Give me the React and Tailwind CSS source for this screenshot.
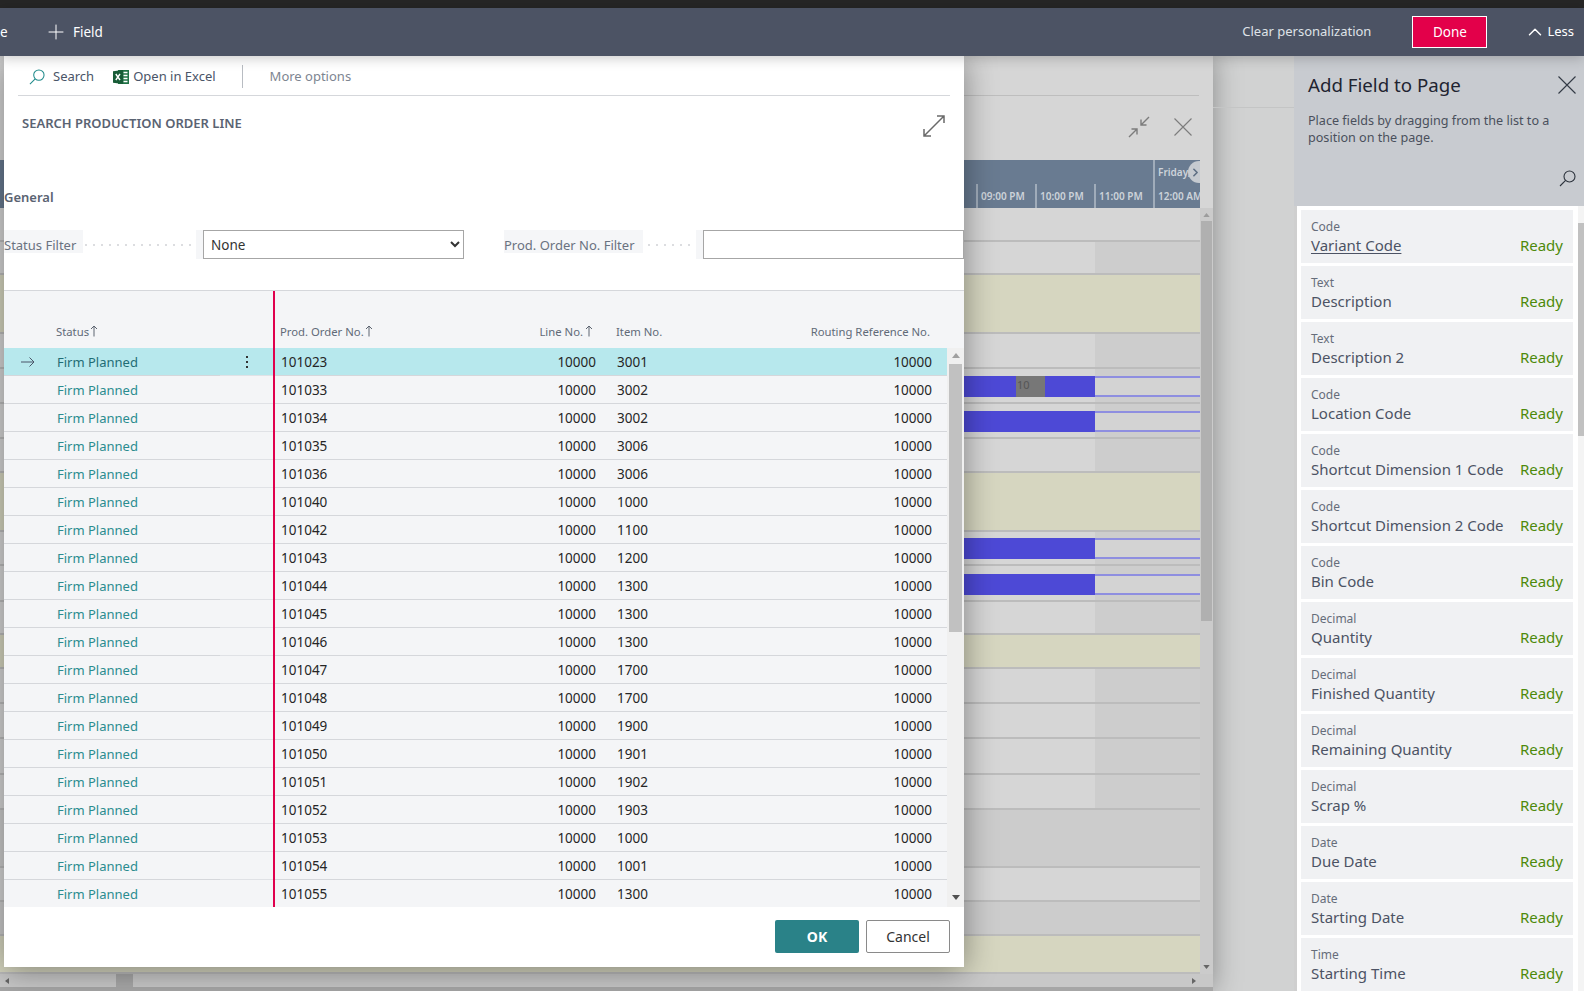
import React from "react";
import { Plus, ChevronUp, ChevronRight } from "lucide-react";

const orders = [
  ["101023", "3001"], ["101033", "3002"], ["101034", "3002"], ["101035", "3006"],
  ["101036", "3006"], ["101040", "1000"], ["101042", "1100"], ["101043", "1200"],
  ["101044", "1300"], ["101045", "1300"], ["101046", "1300"], ["101047", "1700"],
  ["101048", "1700"], ["101049", "1900"], ["101050", "1901"], ["101051", "1902"],
  ["101052", "1903"], ["101053", "1000"], ["101054", "1001"], ["101055", "1300"],
];

const fields = [
  ["Code", "Variant Code"], ["Text", "Description"], ["Text", "Description 2"],
  ["Code", "Location Code"], ["Code", "Shortcut Dimension 1 Code"],
  ["Code", "Shortcut Dimension 2 Code"], ["Code", "Bin Code"], ["Decimal", "Quantity"],
  ["Decimal", "Finished Quantity"], ["Decimal", "Remaining Quantity"], ["Decimal", "Scrap %"],
  ["Date", "Due Date"], ["Date", "Starting Date"], ["Time", "Starting Time"],
];

const ganttRows = [
  { h: "h-[34px]", kind: "plain" },
  { h: "h-[33px]", kind: "col" },
  { h: "h-[59px]", kind: "yellow" },
  { h: "h-[35px]", kind: "col" },
  { h: "h-[35px]", kind: "bar", mt: "mt-[7px]", label: "10" },
  { h: "h-[35px]", kind: "bar", mt: "mt-[7px]" },
  { h: "h-[34px]", kind: "col" },
  { h: "h-[59px]", kind: "yellow" },
  { h: "h-[34px]", kind: "bar", mt: "mt-[6px]" },
  { h: "h-[36px]", kind: "bar", mt: "mt-[8px]" },
  { h: "h-[33px]", kind: "col" },
  { h: "h-[34px]", kind: "yellow" },
  { h: "h-[35px]", kind: "col" },
  { h: "h-[35px]", kind: "col" },
  { h: "h-[36px]", kind: "col" },
  { h: "h-[35px]", kind: "col" },
  { h: "h-[58px]", kind: "dark" },
  { h: "h-[34px]", kind: "plain" },
  { h: "h-[34px]", kind: "dark" },
  { h: "h-[38px]", kind: "yellow" },
];

function SearchIcon({ className, stroke }) {
  return (
    <svg viewBox="0 0 17 17" className={className} fill="none" stroke={stroke} strokeWidth="1.1">
      <circle cx="10.5" cy="6.5" r="5.5" />
      <path d="M6.6 10.4 1 16" />
    </svg>
  );
}

function CloseIcon({ className, stroke }) {
  return (
    <svg viewBox="0 0 18 18" className={className} fill="none" stroke={stroke} strokeWidth="1.1">
      <path d="M0.5 0.5 17.5 17.5M17.5 0.5 0.5 17.5" />
    </svg>
  );
}

function ExcelIcon() {
  return (
    <svg viewBox="0 0 16 16" className="w-4 h-4 shrink-0">
      <path d="M5 1h11v14H5z" fill="#217346" />
      <path d="M10.5 3.5h4M10.5 6.5h4M10.5 9.5h4M10.5 12.5h4" stroke="#fff" strokeWidth="1.4" />
      <path d="M0 2.2 10 1v14L0 13.8z" fill="#185c37" />
      <path d="M2.8 5 7 11M7 5l-4.2 6" stroke="#fff" strokeWidth="1.4" />
    </svg>
  );
}

function Dots({ count }) {
  return (
    <div className="flex items-center gap-[6px] mt-[7px]">
      {Array.from({ length: count }).map((_, i) => (
        <span key={i} className="w-[2px] h-[2px] bg-[#dcdde0]" />
      ))}
    </div>
  );
}

function ArrowUp() {
  return (
    <svg viewBox="0 0 8 12" className="w-2 h-3 text-[#5c6470] shrink-0" fill="none" stroke="currentColor" strokeWidth="1">
      <path d="M4 11.5V1M1 4l3-3 3 3" />
    </svg>
  );
}

function Triangle({ down, className }) {
  return (
    <svg viewBox="0 0 8 5" className={className}>
      <path d={down ? "M0 0h8L4 5z" : "M0 5h8L4 0z"} fill="currentColor" />
    </svg>
  );
}

function GanttRow({ row }) {
  const bg = {
    plain: "bg-[#d6d6d6]",
    col: "bg-[#d6d6d6]",
    bar: "bg-[#d6d6d6]",
    yellow: "bg-[#d6d6c0]",
    dark: "bg-[#cccccc]",
  }[row.kind];
  const hasCol = row.kind === "col" || row.kind === "bar";

  return (
    <div className={`${row.h} ${bg} flex border-b-2 border-[#bcbcbc]`}>
      <div className="flex-1">
        {row.kind === "bar" && (
          <div className={`${row.mt} ml-[500px] h-[21px] bg-[#4d49d6] flex`}>
            {row.label && (
              <div className="ml-[516px] w-[29px] bg-[#777777] text-[11px] leading-[18px] pl-[1px] text-[#555555]">
                {row.label}
              </div>
            )}
          </div>
        )}
      </div>
      {hasCol && (
        <div className="w-[105px] bg-[#cdcdcd]">
          {row.kind === "bar" && <div className={`${row.mt} h-[21px] border-y-2 border-[#8e8ee0] bg-[#d3d3d3]`} />}
        </div>
      )}
    </div>
  );
}

function BackgroundDialog() {
  return (
    <div className="w-[1213px] h-full flex flex-col bg-[#d6d6d6] shadow-[0_0_26px_rgba(0,0,0,0.35)]">
      <div className="h-[40px] ml-[18px] mr-[14px] border-b border-[#bebebe] shrink-0" />
      <div className="h-[64px] shrink-0 flex items-center justify-end gap-[24px] pr-[21px] pb-[3px]">
        <svg viewBox="0 0 22 22" className="w-[22px] h-[22px]" fill="none" stroke="#7c7c7c" strokeWidth="1.4">
          <path d="M21 1l-8 8M13 3.5V9h5.5M1 21l8-8M9 18.5V13H3.5" />
        </svg>
        <CloseIcon className="w-[18px] h-[18px]" stroke="#7c7c7c" />
      </div>
      <div className="h-[48px] w-[1200px] shrink-0 bg-[#697b91] flex justify-end overflow-hidden text-[10px] text-[#cdd3da] font-semibold">
        {["09:00 PM", "10:00 PM", "11:00 PM"].map((t) => (
          <div key={t} className="w-[59px] h-[24px] self-end border-l-2 border-[#a0acba] pl-[3px] leading-[24px] whitespace-nowrap">
            {t}
          </div>
        ))}
        <div className="w-[47px] relative border-l-2 border-[#a0acba] pl-[3px] flex flex-col justify-between whitespace-nowrap">
          <span className="leading-[24px]">Friday,</span>
          <span className="leading-[24px]">12:00 AM</span>
          <span className="absolute left-[33px] top-0 mt-[1px] w-[22px] h-[22px] rounded-full bg-[#c5cad0] flex items-center pl-[1px]">
            <ChevronRight className="w-[13px] h-[13px] text-[#5e6f84]" strokeWidth={3} />
          </span>
        </div>
      </div>
      <div className="flex-1 min-h-0 flex">
        <div className="w-[1200px] flex flex-col">
          {ganttRows.map((row, i) => (
            <GanttRow key={i} row={row} />
          ))}
        </div>
        <div className="flex-1 bg-[#cbcbcb] flex flex-col items-center">
          <Triangle className="w-[7px] h-[4px] mt-[5px] text-[#9c9c9c]" />
          <div className="w-[11px] h-[400px] mt-[4px] bg-[#b0b0b0]" />
          <Triangle down className="w-[7px] h-[4px] mt-auto mb-[5px] text-[#666666]" />
        </div>
      </div>
      <div className="h-[13px] shrink-0 bg-[#c8c8c8] flex items-center">
        <div className="w-[116px] pl-[5px]">
          <div className="w-0 h-0 border-y-[3px] border-y-transparent border-r-[4px] border-r-[#666666]" />
        </div>
        <div className="w-[17px] h-full bg-[#a8a8a8]" />
        <div className="ml-auto mr-[17px] w-0 h-0 border-y-[3px] border-y-transparent border-l-[4px] border-l-[#666666]" />
      </div>
      <div className="h-[4px] shrink-0 bg-[#a6a6a6]" />
    </div>
  );
}

function OrdersTable() {
  return (
    <div className="flex-1 min-h-0 flex flex-col bg-[#f4f5f7] border-t border-[#d5d7db]">
      <div className="h-[57px] shrink-0 flex text-[11.3px] text-[#616a78]">
        <div className="w-[271px] border-r-2 border-[#e0004d] pl-[52px] pt-[32px] flex items-start gap-px leading-[18px]">
          <span>Status</span>
          <span className="mt-[2px]"><ArrowUp /></span>
        </div>
        <div className="flex-1 flex pt-[32px] leading-[18px]">
          <div className="w-[240px] pl-[5px] flex items-start gap-px">
            <span>Prod. Order No.</span>
            <span className="mt-[2px]"><ArrowUp /></span>
          </div>
          <div className="w-[78px] flex justify-end items-start gap-[2px]">
            <span>Line No.</span>
            <span className="mt-[2px]"><ArrowUp /></span>
          </div>
          <div className="w-[176px] pl-[23px]">Item No.</div>
          <div className="w-[161px] text-right whitespace-nowrap">Routing Reference No.</div>
        </div>
      </div>
      <div className="flex-1 min-h-0 flex">
        <div className="w-[943px] overflow-hidden">
          {orders.map(([no, item], i) => {
            const selected = i === 0;
            return (
              <div key={no} className={`h-[28px] flex leading-[29px] ${selected ? "bg-[#b7e8ed]" : ""}`}>
                <div className="w-[269px] flex shrink-0">
                  <div className="w-[216px] flex border-b border-[#d5d7db]">
                    <div className="w-[53px] pl-[17px] flex items-center">
                      {selected && (
                        <svg viewBox="0 0 14 10" className="w-[14px] h-[10px]" fill="none" stroke="#4a5568" strokeWidth="1">
                          <path d="M0 5h13M8.5.5 13 5 8.5 9.5" />
                        </svg>
                      )}
                    </div>
                    <span className={`text-[13px] ${selected ? "text-[#1f6d75]" : "text-[#2a8c8f]"}`}>Firm Planned</span>
                  </div>
                  <div className="flex-1 border-b border-[#e0e2e6] flex justify-center pt-[8px]">
                    {selected && (
                      <div className="flex flex-col gap-[3px]">
                        <span className="w-[2px] h-[2px] bg-[#333333]" />
                        <span className="w-[2px] h-[2px] bg-[#333333]" />
                        <span className="w-[2px] h-[2px] bg-[#333333]" />
                      </div>
                    )}
                  </div>
                </div>
                <div className="w-[2px] bg-[#e0004d] shrink-0" />
                <div className="flex-1 flex border-b border-[#d5d7db] text-[13.5px] text-[#262626]">
                  <div className="w-[240px] pl-[6px]">{no}</div>
                  <div className="w-[81px] text-right">10000</div>
                  <div className="w-[190px] pl-[21px]">{item}</div>
                  <div className="flex-1 text-right pr-[15px]">10000</div>
                </div>
              </div>
            );
          })}
        </div>
        <div className="flex-1 bg-[#f0f0f0] flex flex-col items-center">
          <Triangle className="w-[8px] h-[5px] mt-[5px] text-[#a0a0a0]" />
          <div className="w-[13px] h-[268px] mt-[6px] bg-[#c1c1c1]" />
          <Triangle down className="w-[8px] h-[5px] mt-auto mb-[7px] text-[#505050]" />
        </div>
      </div>
    </div>
  );
}

function Modal() {
  return (
    <div className="absolute left-[4px] top-0 w-[960px] h-[911px] bg-white flex flex-col shadow-[0_4px_30px_rgba(0,0,0,0.4)]">
      <div className="h-[40px] shrink-0 ml-[14px] mr-[14px] border-b border-[#d5d7db] flex items-center text-[13px] pt-[2px]">
        <div className="ml-[11px] flex items-center gap-[8px] text-[#4a5568]">
          <SearchIcon className="w-4 h-4" stroke="#1f8a8a" />
          <span>Search</span>
        </div>
        <div className="ml-[19px] flex items-center gap-[4px] text-[#4a5568]">
          <ExcelIcon />
          <span>Open in Excel</span>
        </div>
        <div className="ml-[26px] w-px h-[23px] bg-[#b8bcc2]" />
        <span className="ml-[27px] text-[#7d8591]">More options</span>
      </div>
      <div className="h-[76px] shrink-0 flex items-start justify-between pl-[18px] pr-[19px] pt-[17px]">
        <h1 className="text-[13px] leading-5 font-semibold text-[#5a6372]">SEARCH PRODUCTION ORDER LINE</h1>
        <svg viewBox="0 0 22 22" className="w-[22px] h-[22px] mt-[2px]" fill="none" stroke="#6a6a6a" strokeWidth="1.5">
          <path d="M1 21 21 1M14 1h7v7M1 14v7h7" />
        </svg>
      </div>
      <div className="h-[58px] shrink-0 pt-[15px] text-[13px] leading-5 font-semibold text-[#5a6372]">General</div>
      <div className="h-[60px] shrink-0 flex items-start text-[13px]">
        <div className="w-[79px] h-[23px] bg-[#f5f6f8] text-[#6a7280] leading-[30px]">Status Filter</div>
        <div className="w-[113px] h-[23px] pl-[2px] flex items-center"><Dots count={14} /></div>
        <div className="w-[7px] h-[29px] bg-[#f5f6f8]" />
        <select defaultValue="None" className="w-[261px] h-[29px] border border-[#a6a6a6] bg-white pl-[3px] text-[13.5px] text-[#333333]">
          <option>None</option>
        </select>
        <div className="ml-[40px] w-[139px] h-[23px] bg-[#f5f6f8] text-[#6a7280] leading-[30px] whitespace-nowrap">Prod. Order No. Filter</div>
        <div className="w-[53px] h-[23px] pl-[5px] flex items-center"><Dots count={6} /></div>
        <div className="w-[7px] h-[29px] bg-[#f5f6f8]" />
        <input className="flex-1 h-[29px] min-w-0 border border-[#a6a6a6] bg-white" />
      </div>
      <OrdersTable />
      <div className="h-[60px] shrink-0 flex justify-end items-start gap-[7px] pt-[13px] pr-[14px] text-[14px]">
        <button className="w-[84px] h-[33px] rounded-[2px] bg-[#2a8288] text-white font-bold">OK</button>
        <button className="w-[84px] h-[33px] rounded-[2px] border border-[#8a8a8a] bg-white text-[#333333]">Cancel</button>
      </div>
    </div>
  );
}

function FieldsPanel() {
  return (
    <aside className="w-[290px] shrink-0 flex flex-col bg-[#c8cbd0]">
      <div className="h-[150px] shrink-0 pl-[14px] pr-[8px] flex flex-col">
        <div className="flex items-start justify-between pt-[15px]">
          <h2 className="text-[18.7px] leading-[27px] text-[#1f2430]">Add Field to Page</h2>
          <CloseIcon className="w-[18px] h-[18px] mt-[5px]" stroke="#333a45" />
        </div>
        <p className="mt-[14px] text-[12.6px] leading-[17px] text-[#4a505c]">
          Place fields by dragging from the list to a
          <br />
          position on the page.
        </p>
        <div className="flex justify-end mt-[24px]">
          <SearchIcon className="w-[17px] h-[17px]" stroke="#2c323c" />
        </div>
      </div>
      <div className="flex-1 min-h-0 flex pl-[3px] bg-[#cfcfcf]">
        <div className="flex-1 bg-white pl-[4px] pr-[5px] pt-[4px] overflow-hidden flex flex-col gap-[3px]">
          {fields.map(([type, name], i) => (
            <div key={name} className="h-[53px] shrink-0 bg-[#f0f1f3] pl-[10px] pr-[10px] pt-[9px]">
              <div className="text-[12px] leading-[16px] text-[#666d7a]">{type}</div>
              <div className="flex justify-between text-[15px] leading-[21px]">
                <span className={i === 0 ? "text-[#4c5364] underline underline-offset-2" : "text-[#4c5364]"}>{name}</span>
                <span className="text-[#4d8a0a]">Ready</span>
              </div>
            </div>
          ))}
        </div>
        <div className="w-[6px] bg-[#f4f4f4] flex flex-col">
          <div className="h-[17px]" />
          <div className="h-[213px] bg-[#c1c1c1]" />
        </div>
      </div>
    </aside>
  );
}

export default function App() {
  return (
    <div className="w-[1584px] h-[991px] overflow-hidden flex flex-col font-['Noto_Sans',sans-serif] bg-[#d1d2d2]">
      <div className="h-2 shrink-0 bg-[#262626]" />
      <header className="relative z-20 h-12 shrink-0 flex items-center bg-[#4c5364] text-[13.5px] text-white shadow-[0_2px_12px_rgba(0,0,0,0.22)]">
        <span className="w-[44px]">e</span>
        <Plus className="w-6 h-6" strokeWidth={1} />
        <span className="ml-[5px]">Field</span>
        <span className="ml-auto text-[13px] text-[#dfe2e7]">Clear personalization</span>
        <button className="ml-[41px] w-[75px] h-[32px] border border-white bg-[#e3004a] text-white">Done</button>
        <ChevronUp className="ml-[37px] w-[22px] h-[22px]" strokeWidth={1.6} />
        <span className="ml-px mr-[10px] text-[13px]">Less</span>
      </header>
      <div className="flex-1 min-h-0 flex">
        <div className="relative flex-1 min-w-0">
          <div className="absolute left-[1213px] right-0 top-[51px] h-px bg-[#c4c5c5]" />
          <BackgroundDialog />
          <Modal />
        </div>
        <FieldsPanel />
      </div>
    </div>
  );
}
